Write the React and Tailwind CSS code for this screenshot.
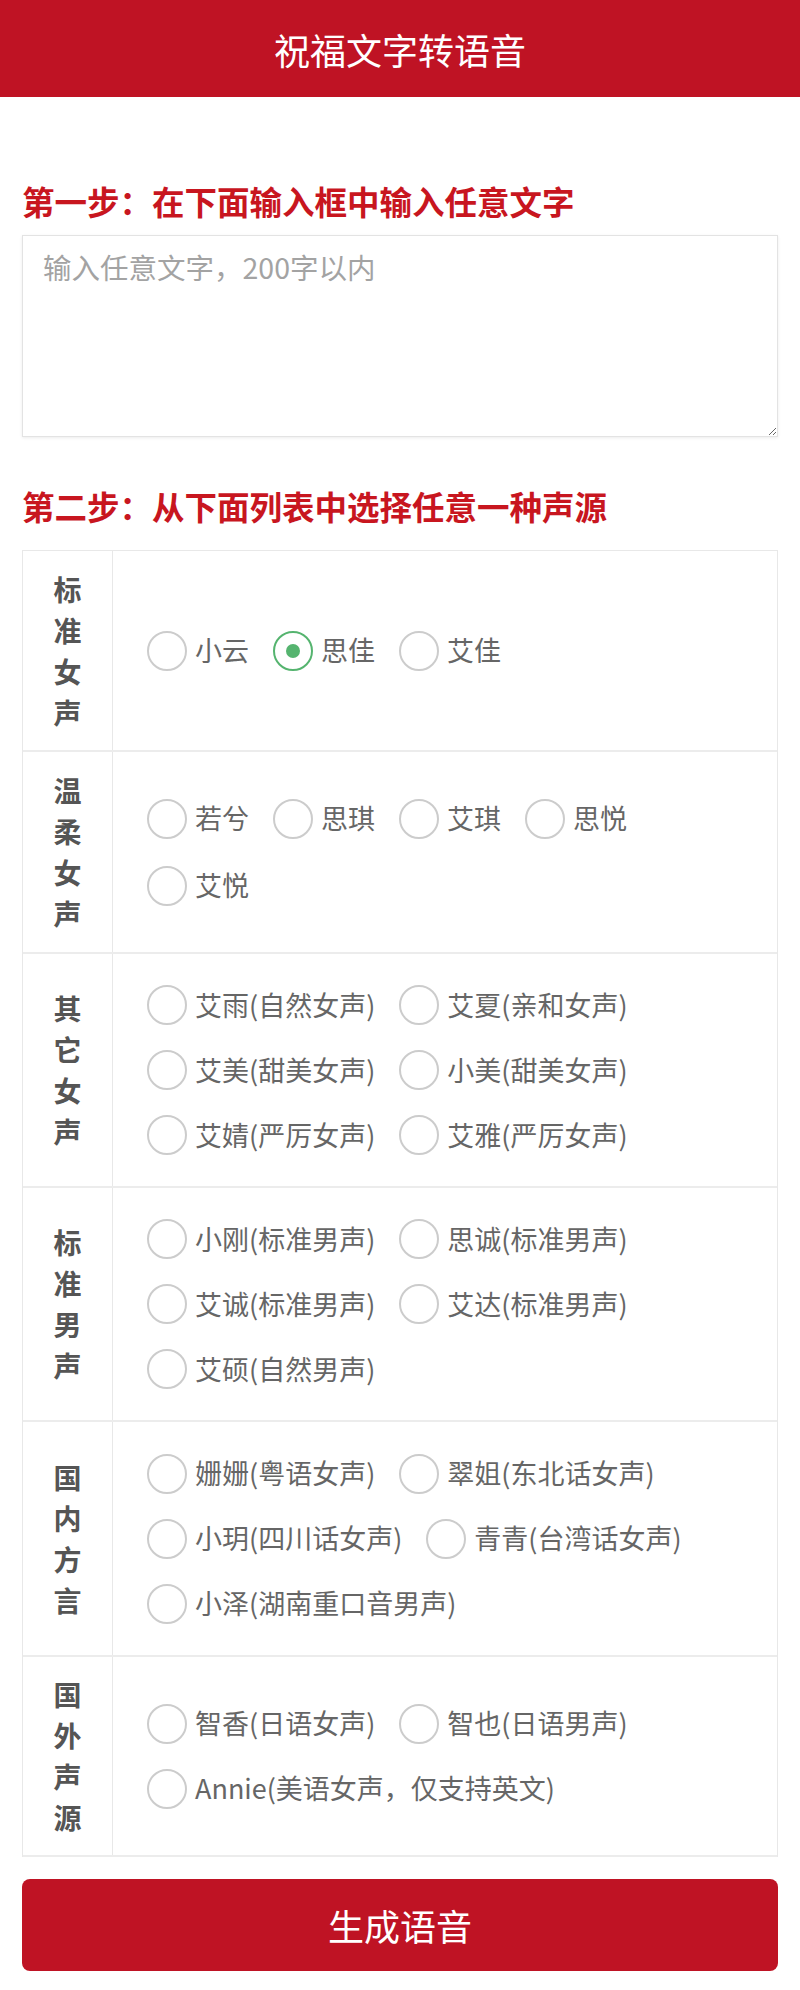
import { useState } from "react";

// 声源分组：每组的行高与选项行距按截图给出
const groups = [
  {
    label: "标准女声",
    items: ["小云", "思佳", "艾佳"],
    row: "h-[201px]",
    gapY: "gap-y-[25px]",
  },
  {
    label: "温柔女声",
    items: ["若兮", "思琪", "艾琪", "思悦", "艾悦"],
    row: "h-[202px]",
    gapY: "gap-y-[27px]",
  },
  {
    label: "其它女声",
    items: [
      "艾雨(自然女声)",
      "艾夏(亲和女声)",
      "艾美(甜美女声)",
      "小美(甜美女声)",
      "艾婧(严厉女声)",
      "艾雅(严厉女声)",
    ],
    row: "h-[234px]",
    gapY: "gap-y-[25px]",
  },
  {
    label: "标准男声",
    items: [
      "小刚(标准男声)",
      "思诚(标准男声)",
      "艾诚(标准男声)",
      "艾达(标准男声)",
      "艾硕(自然男声)",
    ],
    row: "h-[234px]",
    gapY: "gap-y-[25px]",
  },
  {
    label: "国内方言",
    items: [
      "姗姗(粤语女声)",
      "翠姐(东北话女声)",
      "小玥(四川话女声)",
      "青青(台湾话女声)",
      "小泽(湖南重口音男声)",
    ],
    row: "h-[235px]",
    gapY: "gap-y-[25px]",
  },
  {
    label: "国外声源",
    items: ["智香(日语女声)", "智也(日语男声)", "Annie(美语女声，仅支持英文)"],
    row: "h-[200px]",
    gapY: "gap-y-[25px]",
  },
];

const Radio = ({ text, checked, onSelect }) => (
  <label
    className="flex items-center h-[40px] cursor-pointer"
    onClick={onSelect}
  >
    <span
      className={
        checked
          ? "w-[40px] h-[40px] rounded-full border-2 border-[#55b46f] flex items-center justify-center shrink-0"
          : "w-[40px] h-[40px] rounded-full border-2 border-[#cccccc] shrink-0"
      }
    >
      {checked && <span className="w-[14px] h-[14px] rounded-full bg-[#55b46f]" />}
    </span>
    <span className="ml-[8px] text-[27px] text-[#666666] whitespace-nowrap">
      {text}
    </span>
  </label>
);

export default function App() {
  const [voice, setVoice] = useState("思佳");

  return (
    <div className="min-h-[1990px] bg-white font-['Noto_Sans_CJK_SC','Noto_Sans',sans-serif]">
      {/* Header */}
      <header className="h-[97px] bg-[#bf1324] flex items-center justify-center">
        <h1 className="text-[36px] text-white">祝福文字转语音</h1>
      </header>

      <main className="px-[22px] pb-[20px]">
        <h2 className="mt-[84px] mb-[14px] text-[32.5px] leading-[40px] font-bold text-[#c8161f]">
          第一步：在下面输入框中输入任意文字
        </h2>
        <textarea
          className="block w-full h-[202px] border border-[#e3e3e3] shadow-[0_1px_3px_rgba(0,0,0,0.08)] px-[20px] py-[10px] text-[28.5px] text-[#555] placeholder:text-[#a3a3a3] outline-none"
          placeholder="输入任意文字，200字以内"
        />

        <h2 className="mt-[49px] mb-[24px] text-[32.5px] leading-[40px] font-bold text-[#c8161f]">
          第二步：从下面列表中选择任意一种声源
        </h2>

        {/* Voice table */}
        <div className="border-x border-t border-[#e8e8e8]">
          {groups.map((g) => (
            <div
              key={g.label}
              className={`flex border-b-2 border-[#ececec] ${g.row}`}
            >
              <div className="w-[90px] shrink-0 border-r border-[#e8e8e8] flex flex-col items-center justify-center">
                {g.label.split("").map((c, i) => (
                  <span
                    key={i}
                    className="text-[28px] leading-[41px] font-bold text-[#555555]"
                  >
                    {c}
                  </span>
                ))}
              </div>
              <div
                className={`flex-1 flex flex-wrap content-center items-center gap-x-[24px] pl-[34px] pr-[30px] ${g.gapY}`}
              >
                {g.items.map((it) => (
                  <Radio
                    key={it}
                    text={it}
                    checked={voice === it}
                    onSelect={() => setVoice(it)}
                  />
                ))}
              </div>
            </div>
          ))}
        </div>

        <button className="mt-[22px] w-full h-[92px] rounded-[8px] bg-[#bf1324] text-white text-[36px]">
          生成语音
        </button>
      </main>
    </div>
  );
}
